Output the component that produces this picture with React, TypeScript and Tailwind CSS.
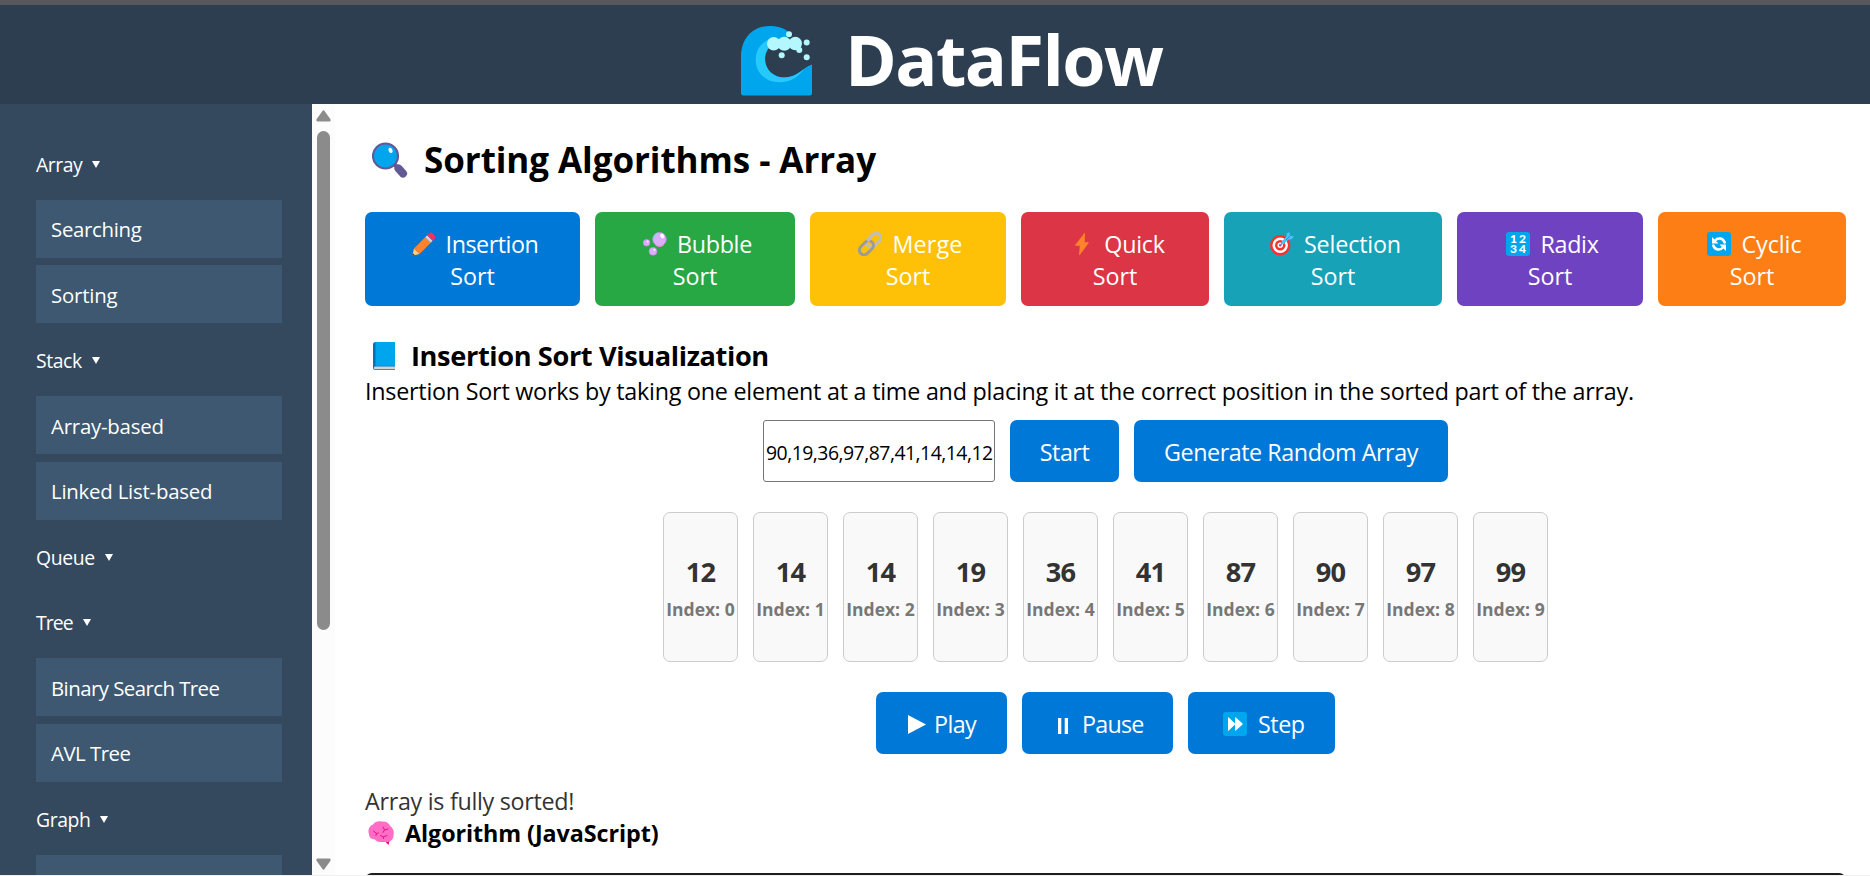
import type { ReactNode } from "react";

function WaveLogo() {
  return (
    <svg className="h-[70px] w-[72px] shrink-0" viewBox="0 0 72 70">
      <path fill="#00a6ed" d="M0 31C0 12 12 0 29 0c8 0 15 2.500 20 7l-5 8C31 15 24 24 24 33c0 11 9 18.500 19 18.500 13 0 18-9.500 28-13V67q0 2.500-2.500 2.500h-66Q0 69.500 0 67Z" />
      <path fill="#26c9fc" d="M28 13C19 18 14.700 25 14.700 34 14.700 47 25 56.300 38 56.300 51 56.300 58 50 63.500 42.500 57 48 52 51.500 43 51.500 33 51.500 24 44 24 33c0-6 2.500-10 5-13Z" />
      <g fill="#b4f7fe">
        <circle cx="32.700" cy="17.700" r="6.700" />
        <circle cx="43.300" cy="17.700" r="7" />
        <circle cx="54.300" cy="17.500" r="6.700" />
        <circle cx="58.300" cy="24" r="3" />
        <circle cx="48" cy="8.300" r="3" />
        <circle cx="65.700" cy="16.500" r="3" />
        <circle cx="65.700" cy="31.300" r="3" />
        <circle cx="40.700" cy="29.300" r="3" />
      </g>
    </svg>
  );
}

function MagnifierIcon() {
  return (
    <svg className="h-[36px] w-[36px] shrink-0" viewBox="0 0 36 36">
      <path d="m22 22 4 4" stroke="#635994" strokeWidth="4" />
      <path d="m26.500 26.500 4.500 5" stroke="#635994" strokeWidth="8" strokeLinecap="round" />
      <circle cx="13.500" cy="14" r="12.500" fill="#00a6ed" stroke="#635994" strokeWidth="2.200" />
      <ellipse cx="18.500" cy="8.300" rx="1.900" ry="2.700" fill="#fff" transform="rotate(-25 18.500 8.300)" />
    </svg>
  );
}

function Icon({ children }: { children: ReactNode }) {
  return (
    <svg className="h-[24px] w-[24px] shrink-0" viewBox="0 0 24 24">
      {children}
    </svg>
  );
}

const pencil = (
  <Icon>
    <path fill="#ffce7c" d="M.3 23.700 2 16.500l5.500 5.500Z" />
    <path fill="#402a32" d="m.3 23.700.5-2.500 2 2Z" />
    <path fill="#ff822d" d="M2 16.500 13.200 5.300l5.500 5.500L7.500 22Z" />
    <path fill="#d3d3d3" d="m13.200 5.300 2-2 5.500 5.500-2 2Z" />
    <path fill="#f92f60" d="m15.200 3.300 2-2q1.500-1.500 3 0l2.500 2.500q1.500 1.500 0 3l-2 2Z" />
  </Icon>
);

const bubbles = (
  <Icon>
    <circle cx="16.500" cy="7.300" r="6.700" fill="#dcaef8" stroke="#c58cf0" />
    <circle cx="3.600" cy="10.800" r="3.300" fill="#dcaef8" stroke="#c58cf0" strokeWidth=".7" />
    <circle cx="10" cy="19.300" r="3.900" fill="#dcaef8" stroke="#c58cf0" strokeWidth=".7" />
    <path d="M11 5.500A6.500 6.500 0 0 1 15 1.200" stroke="#8fd0ff" strokeWidth="1.300" fill="none" />
    <path d="M12.500 12.500a6.500 6.500 0 0 0 8 .3" stroke="#f09bd5" strokeWidth="1.300" fill="none" />
    <ellipse cx="19.300" cy="4" rx="1.900" ry="2.500" fill="#fff" transform="rotate(-35 19.300 4)" />
    <circle cx="4.800" cy="9.500" r=".9" fill="#fff" />
    <circle cx="11.500" cy="17.700" r="1" fill="#fff" />
  </Icon>
);

const link = (
  <Icon>
    <g fill="none" strokeWidth="3">
      <rect x="7.600" y="3.600" width="16" height="9.400" rx="4.700" stroke="#bebebe" transform="rotate(-45 15.600 8.300)" />
      <rect x=".4" y="11" width="16" height="9.400" rx="4.700" stroke="#9b9b9b" transform="rotate(-45 8.400 15.700)" />
      <path d="m9.500 9 2.500-2.500" stroke="#bebebe" />
    </g>
  </Icon>
);

const bolt = (
  <Icon>
    <path fill="#ff822d" d="M14.300 1.200q.8-.7.700.3l-.3 8.700h3.600q1 0 .4.900L9.800 23q-.8.700-.7-.3l.7-8.900H5.600q-1 0-.4-.9Z" />
  </Icon>
);

const target = (
  <Icon>
    <circle cx="10.200" cy="13.300" r="10.200" fill="#f8312f" />
    <circle cx="10.200" cy="13.300" r="7.700" fill="#fff" />
    <circle cx="10.200" cy="13.300" r="5.200" fill="#f8312f" />
    <circle cx="10.200" cy="13.300" r="2.700" fill="#fff" />
    <circle cx="10.200" cy="13.300" r="1.200" fill="#f8312f" />
    <path d="m10.500 13 8-8" stroke="#46a4fb" strokeWidth="1.500" />
    <path fill="#46c4ff" d="m12 12-.5-2.500 5-5 .3-3L19.500 0l.5 3.500 4 1-2.500 2.700-3 .3-5 4.800Z" />
    <path d="m16 8 4.500-4.500" stroke="#2b85e8" strokeWidth="1" />
  </Icon>
);

const digits = (
  <Icon>
    <rect width="24" height="24" rx="3" fill="#00a6ed" />
    <g fill="#fff" fontFamily="Lato, sans-serif" fontWeight="900" fontSize="12" textAnchor="middle">
      <text x="7.500" y="11.200">1</text>
      <text x="16.500" y="11.200">2</text>
      <text x="7.500" y="21.200">3</text>
      <text x="16.500" y="21.200">4</text>
    </g>
  </Icon>
);

const cycle = (
  <Icon>
    <rect width="24" height="24" rx="3" fill="#00a6ed" />
    <path d="M8 8.500c3-3.300 8-2.500 9.700 2" stroke="#fff" strokeWidth="2.600" fill="none" strokeLinecap="round" />
    <path d="M16 15.500c-3 3.300-8 2.500-9.700-2" stroke="#fff" strokeWidth="2.600" fill="none" strokeLinecap="round" />
    <path fill="#fff" d="M5 5v6.500h6.500ZM19 19v-6.500h-6.500Z" />
  </Icon>
);

const forward = (
  <Icon>
    <rect width="24" height="24" rx="3" fill="#00a6ed" />
    <path fill="#fff" d="M5 5.800q0-1 .8-.4l6 5.800q.7.800 0 1.600l-6 5.800q-.8.600-.8-.4ZM12 5.800q0-1 .8-.4l6.500 5.800q.8.800 0 1.600l-6.500 5.800q-.8.600-.8-.4Z" />
  </Icon>
);

function BookIcon() {
  return (
    <svg className="h-[28px] w-[22px] shrink-0" viewBox="0 0 22 28">
      <path fill="#0074ba" d="M2.500 0H22v28H2.500Q0 28 0 25.500v-23Q0 0 2.500 0Z" />
      <path fill="#d3d3d3" d="M2 24.500h20v2.700H2.500Q.8 27.200.8 26T2 24.500Z" />
      <path fill="#00a6ed" d="M2.500 0H22v23.800H2.500Z" />
    </svg>
  );
}

function BrainIcon() {
  return (
    <svg className="h-[24px] w-[26px] shrink-0" viewBox="0 0 26 24">
      <path fill="#e1177e" d="M15 18h7l-1.300 5.500q-.3.700-.8 0Z" />
      <path fill="#ff6dc6" d="M5 3.500C7 .5 11-.3 14 .7c4-.5 7 1.500 8 4 3 2 4.500 6 3.500 9 .5 4-2.500 7-6.500 7.300H13c-3 .3-5-.8-6-2.500C3 18.500.8 16 1 13-.5 9.500 1 5 5 3.500Z" />
      <g fill="none" stroke="#e1177e" strokeWidth="1" strokeLinecap="round">
        <path d="m5.500 10 3 2.500-.5 2M8.300 12.500l2-.5M15 6l1.500 3 3.500-1M16.500 9 15 11.500M12.500 14.500l3 1.500 3.500-1.500M15.500 16v1.500" />
      </g>
    </svg>
  );
}

const sorts = [
  { name: "Insertion", icon: pencil, box: "w-[215px] bg-[#0078d7]", track: "tracking-[-0.02em]" },
  { name: "Bubble", icon: bubbles, box: "w-[200px] bg-[#28a745]", track: "tracking-[-0.014em]" },
  { name: "Merge", icon: link, box: "w-[196px] bg-[#ffc107]", track: "tracking-[0.008em]" },
  { name: "Quick", icon: bolt, box: "w-[188px] bg-[#dc3545]", track: "tracking-[-0.012em]" },
  { name: "Selection", icon: target, box: "w-[218px] bg-[#17a2b8]", track: "tracking-[-0.007em]" },
  { name: "Radix", icon: digits, box: "w-[186px] bg-[#6f42c1]", track: "tracking-[-0.014em]" },
  { name: "Cyclic", icon: cycle, box: "w-[188px] bg-[#fd7e14]", track: "tracking-[-0.002em]" },
];

type Item = { label: string; track: string };
const menu: { title: string; track: string; items: Item[] }[] = [
  { title: "Array", track: "tracking-[-0.025em]", items: [{ label: "Searching", track: "tracking-[-0.015em]" }, { label: "Sorting", track: "tracking-[-0.01em]" }] },
  { title: "Stack", track: "tracking-[-0.022em]", items: [{ label: "Array-based", track: "tracking-[-0.011em]" }, { label: "Linked List-based", track: "tracking-[-0.011em]" }] },
  { title: "Queue", track: "tracking-[-0.018em]", items: [] },
  { title: "Tree", track: "tracking-[-0.045em]", items: [{ label: "Binary Search Tree", track: "tracking-[-0.027em]" }, { label: "AVL Tree", track: "tracking-[-0.025em]" }] },
  { title: "Graph", track: "tracking-[-0.023em]", items: [{ label: "", track: "" }] },
];

const values = [12, 14, 14, 19, 36, 41, 87, 90, 97, 99];

function Sidebar() {
  return (
    <nav className="flex w-[312px] shrink-0 flex-col gap-[7.500px] overflow-hidden bg-[#34495e] pt-[30.200px] pr-[30px] pl-[36px] text-white">
      {menu.map((group) => [
        <div key={group.title} className="flex h-[58px] shrink-0 items-center gap-[10px] pt-[2px]">
          <span className={`text-[19.400px] ${group.track}`}>{group.title}</span>
          <svg className="h-[7px] w-[8px]" viewBox="0 0 8 7">
            <path fill="#fff" d="M0 0h8L4 7Z" />
          </svg>
        </div>,
        ...group.items.map((item, i) => (
          <div key={group.title + i} className="flex h-[58px] shrink-0 items-center bg-[#3d5870] px-[15px] pt-[2px] text-[20.400px] whitespace-nowrap">
            <span className={item.track}>{item.label}</span>
          </div>
        )),
      ])}
    </nav>
  );
}

function Scrollbar() {
  return (
    <div className="flex w-[23px] shrink-0 flex-col bg-[#fcfcfc] pt-[6px] pb-[5px] pl-[4px]">
      <svg className="h-[12px] w-[15px]" viewBox="0 0 15 12">
        <path fill="#8b8b8b" d="M6.300 1.200q1.200-1.700 2.400 0l5.600 7.800q1 2.500-1 2.500H1.700q-2 0-1-2.500Z" />
      </svg>
      <div className="mt-[9px] ml-px h-[499px] w-[13px] rounded-full bg-[#8b8b8b]" />
      <svg className="mt-auto h-[12px] w-[15px]" viewBox="0 0 15 12">
        <path fill="#8b8b8b" d="M6.300 10.800q1.200 1.700 2.400 0L14.300 3q1-2.500-1-2.500H1.700q-2 0-1 2.500Z" />
      </svg>
    </div>
  );
}

const blueButton = "flex h-[62px] items-center rounded-[7px] bg-[#0078d7] pt-[2px] text-white whitespace-nowrap";

export default function App() {
  return (
    <div className="flex h-[876px] w-[1870px] flex-col overflow-hidden bg-white font-['Open_Sans',sans-serif] text-[23.300px] text-black">
      <div className="h-[5px] shrink-0 bg-[#58585c]" />
      <header className="flex h-[99px] shrink-0 items-center bg-[#2c3e50] pl-[741px] text-white">
        <div className="pt-[12px]">
          <WaveLogo />
        </div>
        <h1 className="ml-[32px] pt-[8px] text-[70px] leading-[90px] font-bold tracking-[-0.022em]">DataFlow</h1>
      </header>

      <div className="flex h-[771px] shrink-0">
        <Sidebar />
        <Scrollbar />
        <main className="flex min-w-0 grow flex-col overflow-hidden pt-[32px] pr-[24px] pl-[30px]">
          <h2 className="flex h-[48px] shrink-0 items-center pl-[7px] text-[35px] font-bold">
            <MagnifierIcon />
            <span className="ml-[16px] pt-px tracking-[-0.002em] whitespace-nowrap">Sorting Algorithms - Array</span>
          </h2>

          <div className="mt-[28px] flex shrink-0 gap-[15px]">
            {sorts.map((sort) => (
              <button key={sort.name} className={`flex h-[94px] flex-col items-center justify-center rounded-[7px] pt-[2px] leading-[32px] text-white ${sort.box}`}>
                <span className="flex h-[32px] items-center">
                  <span className="flex w-[34px] justify-center">{sort.icon}</span>
                  <span className={`ml-[5px] ${sort.track}`}>{sort.name}</span>
                </span>
                <span className="h-[32px]">Sort</span>
              </button>
            ))}
          </div>

          <h3 className="mt-[31px] flex h-[38px] shrink-0 items-center pl-[8px] text-[27.200px] font-bold">
            <BookIcon />
            <span className="ml-[16px] tracking-[-0.014em]">Insertion Sort Visualization</span>
          </h3>
          <p className="h-[32px] shrink-0 leading-[32px] tracking-[-0.0098em] whitespace-nowrap">
            Insertion Sort works by taking one element at a time and placing it at the correct position in the sorted part of the array.
          </p>

          <div className="mt-[13px] flex shrink-0 justify-center gap-[15px]">
            <div className="flex h-[62px] w-[232px] items-center rounded-[3px] border border-[#767676] px-[2px] pt-[4px]">
              <span className="text-[19.400px] tracking-[-0.026em] whitespace-nowrap">90,19,36,97,87,41,14,14,12</span>
            </div>
            <button className={`${blueButton} w-[109px] justify-center tracking-[-0.02em]`}>Start</button>
            <button className={`${blueButton} w-[314px] justify-center tracking-[-0.019em]`}>Generate Random Array</button>
          </div>

          <div className="mt-[30px] flex shrink-0 justify-center gap-[15px]">
            {values.map((value, i) => (
              <div key={i} className="flex h-[150px] w-[75px] flex-col items-center rounded-[7px] border border-[#ccc] bg-[#f9f9f9] pt-[40px] font-bold whitespace-nowrap">
                <span className="text-[27.200px] leading-[38px] tracking-[-0.03em] text-[#333]">{value}</span>
                <span className="text-[17.500px] leading-[36px] text-[#777]">Index: {i}</span>
              </div>
            ))}
          </div>

          <div className="mt-[30px] flex shrink-0 justify-center gap-[15px]">
            <button className={`${blueButton} w-[131px] pl-[32px]`}>
              <svg className="mt-px h-[19px] w-[18px]" viewBox="0 0 18 19">
                <path fill="#fff" d="M0 0 18 9.500 0 19Z" />
              </svg>
              <span className="ml-[8px] tracking-[-0.025em]">Play</span>
            </button>
            <button className={`${blueButton} w-[151px] pl-[36px]`}>
              <svg className="mt-[4px] h-[16px] w-[10px]" viewBox="0 0 10 16">
                <path fill="#fff" d="M0 0h3.300v16H0ZM6.700 0H10v16H6.700Z" />
              </svg>
              <span className="ml-[14px] tracking-[-0.032em]">Pause</span>
            </button>
            <button className={`${blueButton} w-[147px] pl-[35px]`}>
              {forward}
              <span className="ml-[11px] tracking-[-0.02em]">Step</span>
            </button>
          </div>

          <p className="mt-[31px] h-[32px] shrink-0 leading-[32px] tracking-[-0.0124em] text-[#333]">Array is fully sorted!</p>
          <h4 className="flex h-[32px] shrink-0 items-center pl-[3px] font-bold">
            <BrainIcon />
            <span className="ml-[11px] tracking-[-0.003em]">Algorithm (JavaScript)</span>
          </h4>
          <pre className="mt-[24px] h-[40px] shrink-0 rounded-[7px] bg-[#1e1e1e]" />
        </main>
      </div>
      <div className="h-px shrink-0 bg-[#f0f0f0]" />
    </div>
  );
}
